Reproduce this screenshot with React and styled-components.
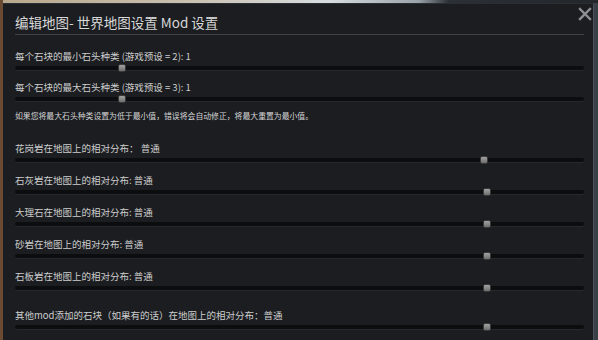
import React from 'react';
import styled, { createGlobalStyle } from 'styled-components';

const GlobalStyle = createGlobalStyle`
  html, body {
    margin: 0;
    padding: 0;
    width: 598px;
    height: 340px;
    overflow: hidden;
    background: #2a2e33;
  }
  body {
    font-family: "Noto Sans CJK SC", "Noto Sans", "Liberation Sans", sans-serif;
  }
`;

const Backdrop = styled.div`
  width: 598px;
  height: 340px;
  box-sizing: border-box;
  padding: 3px 4px 0 3px;
  display: flex;
  background:
    linear-gradient(to right, #6b4a32 0, #6b4a32 3px, transparent 3px),
    linear-gradient(to bottom, transparent 3px, #3a4048 3px),
    linear-gradient(to right, #b7a88c 0%, #c9bfae 30%, #d7dde0 55%, #9aa3aa 70%, #2b3036 75%, #23272c 100%);
`;

const Panel = styled.div`
  position: relative;
  flex: 1;
  background: #1b1d21;
  border-top: 1px solid #2b2f34;
  border-right: 1px solid #4a525b;
  padding: 0 9px 0 12px;
  display: flex;
  flex-direction: column;
  color: #c9c9c9;
`;

const Header = styled.div`
  height: 31px;
  display: flex;
  align-items: flex-end;
  border-bottom: 1px solid #3e4145;
  padding-bottom: 3px;
  box-sizing: border-box;
`;

const Title = styled.h1`
  margin: 0;
  font-size: 13.5px;
  font-weight: 400;
  line-height: 18px;
  color: #d8d8d8;
`;

const Close = styled.button`
  position: absolute;
  top: 3px;
  right: 1px;
  width: 14px;
  height: 14px;
  padding: 0;
  border: none;
  background: none;
  cursor: pointer;
`;

const Row = styled.div`
  display: flex;
  flex-direction: column;
  gap: 4px;
  margin-top: ${p => p.$space}px;
`;

const Label = styled.div`
  font-size: 9.5px;
  line-height: 12px;
  height: 12px;
  white-space: nowrap;
  color: #cdcdcd;
`;

const Note = styled.div`
  font-size: 7.85px;
  line-height: 12px;
  height: 12px;
  margin-top: 9px;
  white-space: nowrap;
  color: #d4d4d4;
`;

const Track = styled.div`
  position: relative;
  height: 4px;
  border-radius: 2px;
  background: #0b0d0f;
  box-shadow: 0 1px 0 #25282c;
`;

const Thumb = styled.div`
  position: absolute;
  top: -2px;
  width: 8px;
  height: 8px;
  border-radius: 2px;
  transform: translateX(-50%);
  background: linear-gradient(#a2a2a2, #6e6e6e);
  border: 1px solid #3a3a3a;
  box-sizing: border-box;
`;

const Slider = ({ value }) => (
  <Track>
    <Thumb style={{ left: `${value}%` }} />
  </Track>
);

const top = [
  { label: '每个石块的最小石头种类 (游戏预设 = 2):  1', value: 18.8, space: 15 },
  { label: '每个石块的最大石头种类 (游戏预设 = 3):  1', value: 18.8, space: 11 },
];

const dist = [
  { label: '花岗岩在地图上的相对分布：  普通', value: 82.5, space: 20 },
  { label: '石灰岩在地图上的相对分布: 普通', value: 82.9, space: 12 },
  { label: '大理石在地图上的相对分布: 普通', value: 82.9, space: 12 },
  { label: '砂岩在地图上的相对分布: 普通', value: 82.9, space: 12 },
  { label: '石板岩在地图上的相对分布: 普通', value: 82.9, space: 12 },
  { label: '其他mod添加的石块（如果有的话）在地图上的相对分布：普通', value: 82.9, space: 19 },
];

export default function App() {
  return (
    <>
      <GlobalStyle />
      <Backdrop>
        <Panel>
          <Header>
            <Title>编辑地图- 世界地图设置 Mod 设置</Title>
          </Header>
          <Close aria-label="关闭">
            <svg width="14" height="14" viewBox="0 0 14 14">
              <path d="M2 2 L12 12 M12 2 L2 12" stroke="#8d9094" strokeWidth="2.4" strokeLinecap="square" />
            </svg>
          </Close>
          {top.map(r => (
            <Row key={r.label} $space={r.space}>
              <Label>{r.label}</Label>
              <Slider value={r.value} />
            </Row>
          ))}
          <Note>如果您将最大石头种类设置为低于最小值，错误将会自动修正，将最大重置为最小值。</Note>
          {dist.map(r => (
            <Row key={r.label} $space={r.space}>
              <Label>{r.label}</Label>
              <Slider value={r.value} />
            </Row>
          ))}
        </Panel>
      </Backdrop>
    </>
  );
}
